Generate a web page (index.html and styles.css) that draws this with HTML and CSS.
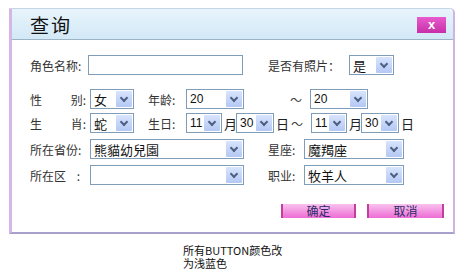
FILE: index.html
```html
<!DOCTYPE html>
<html lang="zh">
<head>
    <meta charset="UTF-8">
    <meta name="viewport" content="width=device-width, initial-scale=1.0">
    <title>查询</title>
    <link rel="stylesheet" href="styles.css">
</head>
<body>
    <!-- Ventana de consulta -->
    <div class="dialog">
        <div class="titlebar">
            <span class="title">查询</span>
            <button class="close-button">x</button>
        </div>

        <div class="content">
            <div class="row r1">
                <span class="label">角色名称:</span>
                <span class="textbox"></span>
                <span class="label photo">是否有照片：</span>
                <span class="sel w45"><span class="val big">是</span><span class="arr"></span></span>
            </div>

            <div class="row r2">
                <span class="label spread"><span>性</span><span>别:</span></span>
                <span class="sel w44"><span class="val big">女</span><span class="arr"></span></span>
                <span class="label age">年龄:</span>
                <span class="sel w58"><span class="val">20</span><span class="arr"></span></span>
                <span class="tilde t1">～</span>
                <span class="sel w58"><span class="val">20</span><span class="arr"></span></span>
            </div>

            <div class="row r3">
                <span class="label spread"><span>生</span><span>肖:</span></span>
                <span class="sel w44"><span class="val big">蛇</span><span class="arr"></span></span>
                <span class="label age">生日:</span>
                <span class="sel w36"><span class="val">11</span><span class="arr"></span></span>
                <span class="unit">月</span>
                <span class="sel w38"><span class="val">30</span><span class="arr"></span></span>
                <span class="unit">日</span>
                <span class="tilde t2">～</span>
                <span class="sel w36"><span class="val">11</span><span class="arr"></span></span>
                <span class="unit">月</span>
                <span class="sel w38"><span class="val">30</span><span class="arr"></span></span>
                <span class="unit">日</span>
            </div>

            <div class="row r4">
                <span class="label">所在省份:</span>
                <span class="sel w154"><span class="val big">熊貓幼兒園</span><span class="arr"></span></span>
                <span class="label side">星座:</span>
                <span class="sel w100"><span class="val big">魔羯座</span><span class="arr"></span></span>
            </div>

            <div class="row r5">
                <span class="label">所在区&nbsp;&nbsp;&nbsp;&nbsp;:</span>
                <span class="sel w154"><span class="val big"></span><span class="arr"></span></span>
                <span class="label side">职业:</span>
                <span class="sel w100"><span class="val big">牧羊人</span><span class="arr"></span></span>
            </div>

            <div class="buttons">
                <button class="pink-button ok">确定</button>
                <button class="pink-button cancel">取消</button>
            </div>
        </div>
    </div>

    <!-- Nota -->
    <div class="note">
        <div class="note-line">所有BUTTON颜色改</div>
        <div class="note-line">为浅蓝色</div>
    </div>
</body>
</html>
```

FILE: styles.css
```css
body {
    margin: 0;
    background-color: #ffffff;
    font-family: "Liberation Sans", "Noto Sans CJK SC", sans-serif;
    font-size: 12px;
    color: #222;
}

.dialog {
    margin: 8px 0 0 9px;
    width: 441px;
    height: 223px;
    border-left: 3px solid #d6b6e8;
    border-right: 2px solid #cdb4e2;
    border-bottom: 2px solid #a9a0cc;
    border-top: 1px solid #c4d6e4;
    border-radius: 0 5px 0 0;
    background-color: #ffffff;
}

.titlebar {
    height: 30px;
    display: flex;
    align-items: center;
    justify-content: space-between;
    padding: 0 7px 0 18px;
    background: linear-gradient(#e8f4fb, #d2e9f6);
    border-bottom: 1px solid #9db3c6;
    border-radius: 0 5px 0 0;
}

.title {
    font-family: "Noto Sans CJK SC", sans-serif;
    font-size: 19px;
    color: #111;
    letter-spacing: 2px;
}

.close-button {
    width: 29px;
    height: 16px;
    margin-top: 2px;
    border: none;
    padding: 0;
    background: linear-gradient(#e85ccd, #c72ea8);
    color: white;
    font-family: "Liberation Sans", sans-serif;
    font-weight: bold;
    font-size: 13px;
    line-height: 14px;
}

.content {
    padding: 15px 0 0 18px;
}

.row {
    display: flex;
    align-items: center;
    height: 20px;
}

.r2 { margin-top: 14px; }
.r3 { margin-top: 4px; }
.r4 { margin-top: 6px; }
.r5 { margin-top: 6px; }

.label {
    font-family: "Noto Sans CJK SC", sans-serif;
    font-size: 12px;
    color: #333;
    width: 58px;
    white-space: nowrap;
}

.spread {
    display: flex;
    justify-content: space-between;
    width: 56px;
    margin-right: 4px;
}

.r4 > .label:first-child,
.r5 > .label:first-child {
    width: 60px;
}

.label.photo {
    width: 81px;
    margin-left: 25px;
}

.label.age {
    width: 38px;
    margin-left: 14px;
}

.label.side {
    width: 36px;
    margin-left: 24px;
}

.textbox {
    width: 153px;
    height: 18px;
    border: 1px solid #7f9db9;
    background: white;
}

.sel {
    display: flex;
    align-items: center;
    justify-content: space-between;
    height: 18px;
    border: 1px solid #7f9db9;
    background: white;
    box-sizing: content-box;
}

.w45 { width: 43px; }
.w44 { width: 42px; }
.w58 { width: 56px; }
.w36 { width: 34px; }
.w38 { width: 36px; }
.w154 { width: 152px; }
.w100 { width: 98px; }

.val {
    padding-left: 3px;
    font-family: "Liberation Sans", sans-serif;
    font-size: 12px;
    color: #111;
    white-space: nowrap;
}

.val.big {
    font-family: "Noto Sans CJK SC", sans-serif;
    font-size: 13px;
}

.arr {
    position: relative;
    width: 16px;
    height: 16px;
    margin-right: 1px;
    background: linear-gradient(#d8e4fc, #b4c8f4);
    border-radius: 1px;
}

/* flecha del select */
.arr::before {
    content: "";
    position: absolute;
    left: 5px;
    top: 4px;
    width: 4px;
    height: 4px;
    border-right: 2px solid #4d6185;
    border-bottom: 2px solid #4d6185;
    transform: rotate(45deg);
}

.unit {
    font-family: "Noto Sans CJK SC", sans-serif;
    font-size: 13px;
    width: 12px;
    margin: 0 0 0 2px;
    color: #222;
}

.tilde {
    font-family: "Noto Sans CJK SC", sans-serif;
    font-size: 12px;
    color: #444;
}

.t1 { margin: 0 8px 0 46px; }
.t2 { margin: 0 8px 0 3px; }

.buttons {
    display: flex;
    justify-content: flex-end;
    gap: 11px;
    margin-top: 19px;
    padding-right: 9px;
}

.pink-button {
    height: 14px;
    padding: 0;
    border: none;
    border-left: 2px solid #c0409c;
    border-right: 2px solid #c0409c;
    background: linear-gradient(#f8c2ee, #ee6cd4);
    font-family: "Noto Sans CJK SC", sans-serif;
    font-size: 12px;
    line-height: 14px;
    color: #2c2c6a;
}

.ok { width: 75px; }
.cancel { width: 77px; }

.note {
    margin: 10px 0 0 183px;
    font-family: "Noto Sans CJK SC", sans-serif;
    font-size: 11px;
    color: #111;
}

.note-line {
    height: 13px;
    line-height: 13px;
}
```
